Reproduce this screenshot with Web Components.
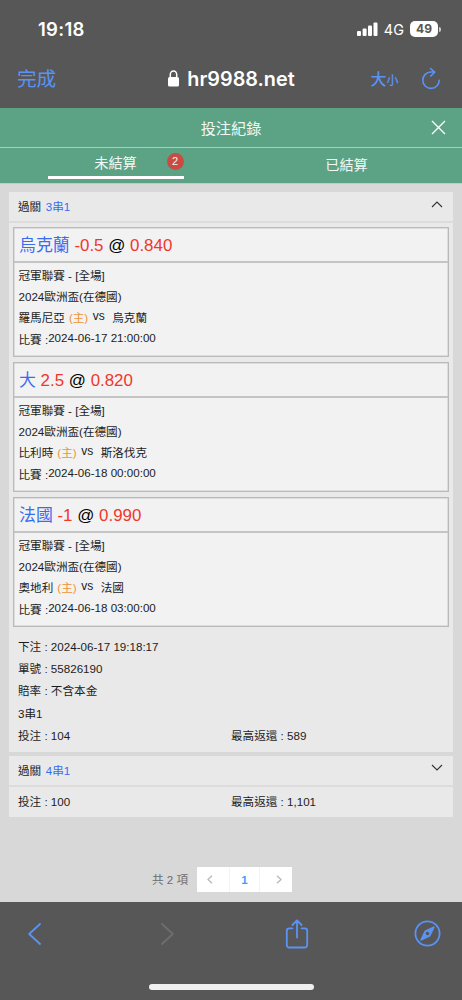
<!DOCTYPE html>
<html lang="zh-Hant">
<head>
<meta charset="utf-8">
<title>投注紀錄</title>
<style>
    body {
        margin: 0;
        background: #d8d8d8;
        font-family: "Liberation Sans", "Noto Sans CJK TC", sans-serif;
        font-size: 11.6px;
        color: #1c1c1c;
    }
</style>
</head>
<body>
<phone-screen>
    <status-bar slot="top" time="19:18" network="4G" battery="49"></status-bar>
    <address-bar slot="top" host="hr9988.net"></address-bar>
    <records-header heading="投注紀錄" count="2"></records-header>
    <bet-group type="過關" combo="3串1" open>
        <bet-card pick="烏克蘭" line="-0.5" odds="0.840" home="羅馬尼亞" away="烏克蘭" time="2024-06-17 21:00:00"></bet-card>
        <bet-card pick="大" line="2.5" odds="0.820" home="比利時" away="斯洛伐克" time="2024-06-18 00:00:00"></bet-card>
        <bet-card pick="法國" line="-1" odds="0.990" home="奧地利" away="法國" time="2024-06-18 03:00:00"></bet-card>
        <bet-summary slot="summary" stake="104" payout="589">
            <div>下注 : 2024-06-17 19:18:17</div>
            <div>單號 : 55826190</div>
            <div>賠率 : 不含本金</div>
            <div>3串1</div>
        </bet-summary>
    </bet-group>
    <bet-group type="過關" combo="4串1">
        <bet-summary slot="summary" stake="100" payout="1,101"></bet-summary>
    </bet-group>
    <page-nav total="2" page="1"></page-nav>
    <tool-bar slot="bottom"></tool-bar>
</phone-screen>

<script>
class BaseElement extends HTMLElement {
    constructor() {
        super();
        this.attachShadow({ mode: 'open' });
    }

    connectedCallback() {
        this.shadowRoot.innerHTML = this.render();
    }

    attr(name) {
        return this.getAttribute(name) || '';
    }
}

class PhoneScreen extends BaseElement {
    render() {
        return `
            <style>
                :host {
                    display: flex;
                    flex-direction: column;
                    width: 462px;
                    height: 1000px;
                    overflow: hidden;
                }
                header, footer { flex: none; background: #575757; }
                header { height: 108px; }
                footer { height: 98px; }
                main { flex: 1; min-height: 0; display: flex; flex-direction: column; }
            </style>
            <header><slot name="top"></slot></header>
            <main><slot></slot></main>
            <footer><slot name="bottom"></slot></footer>
        `;
    }
}

class StatusBar extends BaseElement {
    render() {
        return `
            <style>
                :host {
                    display: flex;
                    align-items: center;
                    box-sizing: border-box;
                    height: 58px;
                    padding: 0 21px 0 38px;
                    color: #fff;
                    font-family: Inter, sans-serif;
                }
                .time { flex: 1; font-size: 18.5px; font-weight: 600; letter-spacing: 0.3px; }
                .bars { margin-right: 6px; }
                .network { font-size: 14.5px; margin-right: 6px; line-height: 20px; margin-top: 2px; }
                .battery {
                    width: 28px;
                    height: 15.5px;
                    border-radius: 5px;
                    background: #fff;
                    color: #575757;
                    font-size: 12px;
                    font-weight: 700;
                    line-height: 16px;
                    text-align: center;
                }
                .nub { width: 2px; height: 5px; margin-left: 1px; border-radius: 0 2px 2px 0; background: #ccc; }
            </style>
            <span class="time">${this.attr('time')}</span>
            <svg class="bars" width="21" height="14" viewBox="0 0 21 14" fill="#fff">
                <rect x="0" y="9" width="4" height="5" rx="1"/>
                <rect x="5.6" y="6.5" width="4" height="7.5" rx="1"/>
                <rect x="11" y="3.5" width="4" height="10.5" rx="1"/>
                <rect x="16.5" y="0.5" width="4" height="13.5" rx="1"/>
            </svg>
            <span class="network">${this.attr('network')}</span>
            <span class="battery">${this.attr('battery')}</span>
            <span class="nub"></span>
        `;
    }
}

class AddressBar extends BaseElement {
    render() {
        return `
            <style>
                :host {
                    display: grid;
                    grid-template-columns: 1fr auto 1fr;
                    align-items: center;
                    height: 42px;
                    padding: 0 21px 0 17px;
                    color: #5a93f5;
                }
                .done { font-size: 19.6px; margin-top: -4px; }
                .host {
                    display: flex;
                    align-items: center;
                    margin: -1px 0 0 5px;
                    color: #fff;
                    font-family: Inter, sans-serif;
                    font-size: 19.8px;
                    font-weight: 600;
                }
                .host svg { margin-right: 8px; }
                .tools { display: flex; justify-content: flex-end; align-items: center; }
                .size { display: flex; align-items: baseline; font-weight: 500; font-size: 16px; margin: -3px 22.5px 0 0; }
                .size small { font-size: 12px; }
            </style>
            <span class="done">完成</span>
            <span class="host">
                <svg width="11" height="17" viewBox="0 0 11 17">
                    <path d="M2.3 8V4.6a3.2 3.6 0 0 1 6.4 0V8" fill="none" stroke="#fff" stroke-width="1.5"/>
                    <rect y="7" width="11" height="9.5" rx="1.6" fill="#fff"/>
                </svg>${this.attr('host')}
            </span>
            <span class="tools">
                <span class="size">大<small>小</small></span>
                <svg width="20" height="24" viewBox="0 0 20 24" fill="none" stroke="#5a93f5" stroke-width="1.6" stroke-linecap="round" stroke-linejoin="round">
                    <path d="M18.2 13.2A8.2 8.2 0 1 1 10 5h3.6M9.5 1.5L13.7 5.2L9.8 9"/>
                </svg>
            </span>
        `;
    }
}

class RecordsHeader extends BaseElement {
    render() {
        return `
            <style>
                :host { display: block; flex: none; height: 76px; margin-bottom: 8px; background: #5ba384; color: #f2f8f5; border-bottom: 1px solid #b9cfc5; box-sizing: border-box; }
                .title {
                    display: grid;
                    grid-template-columns: 1fr auto 1fr;
                    align-items: center;
                    height: 39px;
                    border-bottom: 1px solid #a8cdbc;
                    font-size: 15.2px;
                }
                .title span { grid-column: 2; margin-top: -2px; }
                .title svg { justify-self: end; margin: -1px 16px 0 0; }
                .tabs { display: grid; grid-template-columns: 1fr 1fr; height: 35px; font-size: 14.2px; text-align: center; }
                .tab { position: relative; line-height: 35px; }
                .active { width: 136px; height: 27.5px; line-height: 31px; margin-left: 47.5px; border-bottom: 3px solid #fff; }
                .badge {
                    position: absolute;
                    top: 4.5px;
                    right: 0;
                    width: 17px;
                    height: 17px;
                    border-radius: 50%;
                    background: #cc4b40;
                    font-size: 11px;
                    line-height: 17px;
                }
            </style>
            <div class="title">
                <span>${this.attr('heading')}</span>
                <svg width="15" height="15" viewBox="0 0 15 15" stroke="#fff" stroke-width="1.4"><path d="M1 1L14 14M14 1L1 14"/></svg>
            </div>
            <div class="tabs">
                <div class="tab active">未結算<span class="badge">${this.attr('count')}</span></div>
                <div class="tab">已結算</div>
            </div>
        `;
    }
}

class BetGroup extends BaseElement {
    render() {
        const arrow = this.hasAttribute('open') ? 'M1 6L6 1L11 6' : 'M1 1L6 6L11 1';
        return `
            <style>
                :host { display: block; flex: none; margin: 0 9px 4px; background: #e9e9e9; }
                .head {
                    display: flex;
                    align-items: center;
                    height: 29px;
                    padding: 0 10px 0 9px;
                    border-bottom: 2px solid #dcdcdc;
                }
                .head span { margin-top: -1px; }
                .combo { flex: 1; margin-left: 4.5px; color: #3a6cf0; }
                .head svg { margin-bottom: 5px; }
                .cards { display: flex; flex-direction: column; gap: 5px; padding: 4px 4px 0; }
                :host(:not([open])) .cards { display: none; }
            </style>
            <div class="head">
                <span>${this.attr('type')}</span>
                <span class="combo">${this.attr('combo')}</span>
                <svg width="12" height="7" viewBox="0 0 12 7" fill="none" stroke="#333" stroke-width="1.1"><path d="${arrow}"/></svg>
            </div>
            <div class="cards"><slot></slot></div>
            <slot name="summary"></slot>
        `;
    }
}

class BetCard extends BaseElement {
    render() {
        return `
            <style>
                :host {
                    display: block;
                    box-sizing: border-box;
                    height: 130px;
                    border: 1.5px solid #bababa;
                    box-shadow: inset 0 0 0 0.5px #c8c8c8;
                    background: #f2f2f2;
                }
                .pick {
                    height: 33px;
                    padding-left: 5px;
                    border-bottom: 2px solid #c4c4c4;
                    font-size: 16.9px;
                    line-height: 35px;
                    color: #000;
                    white-space: pre;
                }
                .name { color: #3a6cf0; }
                .red { color: #f0372b; }
                .info { padding: 2px 0 0 4.5px; }
                .info div { display: flex; height: 21.2px; line-height: 22px; white-space: pre; }
                .host { color: #ee9235; margin-left: 4px; }
                .vs { margin: -2px 7.5px 0 4.5px; font-size: 12px; }
                .time { margin-top: -2px; }
            </style>
            <div class="pick"><span class="name">${this.attr('pick')}</span> <span class="red">${this.attr('line')}</span> @ <span class="red">${this.attr('odds')}</span></div>
            <div class="info">
                <div>冠軍聯賽 - [全場]</div>
                <div>2024歐洲盃(在德國)</div>
                <div><span>${this.attr('home')}</span><span class="host">(主)</span><span class="vs">vs</span><span>${this.attr('away')}</span></div>
                <div><span>比賽 :</span><span class="time">${this.attr('time')}</span></div>
            </div>
        `;
    }
}

class BetSummary extends BaseElement {
    render() {
        // the collapsed group only has the stake row
        const padding = this.childElementCount ? '9px 0 5px' : '4px 0';
        return `
            <style>
                :host { display: block; padding: ${padding}; line-height: 22.2px; }
                ::slotted(div) { padding-left: 9px; height: 22.2px; }
                .totals { display: grid; grid-template-columns: 1fr 1fr; height: 22.2px; }
                .totals span:first-child { padding-left: 9px; }
            </style>
            <slot></slot>
            <div class="totals">
                <span>投注 : ${this.attr('stake')}</span>
                <span>最高返還 : ${this.attr('payout')}</span>
            </div>
        `;
    }
}

class PageNav extends BaseElement {
    render() {
        return `
            <style>
                :host {
                    display: flex;
                    align-items: center;
                    justify-content: center;
                    height: 25px;
                    margin: auto 18px 9px 0;
                    border-bottom: 1px solid transparent;
                    color: #6b6c6f;
                }
                .total { margin: -2px 9px 0 0; }
                .box {
                    display: grid;
                    grid-template-columns: repeat(3, 1fr);
                    width: 95px;
                    height: 25px;
                    background: #fff;
                }
                .box > * { display: flex; align-items: center; justify-content: center; }
                .page { border: solid #f3f3f3; border-width: 0 1px; color: #409eff; font-weight: 700; }
                .prev { padding-right: 6px; }
                .next { padding-left: 6px; }
            </style>
            <span class="total">共 ${this.attr('total')} 項</span>
            <div class="box">
                <span class="prev"><svg width="6" height="9" viewBox="0 0 6 9" fill="none" stroke="#b6b9bf" stroke-width="1.3"><path d="M5 0.7L1 4.5L5 8.3"/></svg></span>
                <span class="page">${this.attr('page')}</span>
                <span class="next"><svg width="6" height="9" viewBox="0 0 6 9" fill="none" stroke="#b6b9bf" stroke-width="1.3"><path d="M1 0.7L5 4.5L1 8.3"/></svg></span>
            </div>
        `;
    }
}

class ToolBar extends BaseElement {
    render() {
        return `
            <style>
                :host { display: flex; flex-direction: column; height: 98px; }
                svg { fill: none; stroke: #5a93f5; stroke-width: 1.8; stroke-linecap: round; stroke-linejoin: round; }
                .icons { display: flex; align-items: center; height: 63px; padding-left: 27.5px; }
                .forward { margin: 0 111px 0 120.5px; stroke: #6e6e6e; }
                .compass { margin-left: 105px; }
                .indicator { width: 165px; height: 6px; margin: 19px 0 0 149px; border-radius: 3px; background: #f0f0f0; }
            </style>
            <div class="icons">
                <svg width="13" height="22" viewBox="0 0 13 22"><path d="M12 1L1.2 11L12 21"/></svg>
                <svg class="forward" width="13" height="22" viewBox="0 0 13 22"><path d="M1 1L11.8 11L1 21"/></svg>
                <svg width="24" height="30" viewBox="0 0 24 30">
                    <path d="M7.5 9.3H4.2a2.4 2.4 0 0 0-2.4 2.4v14.4a2.4 2.4 0 0 0 2.4 2.4h15.6a2.4 2.4 0 0 0 2.4-2.4V11.7a2.4 2.4 0 0 0-2.4-2.4H16.5M12 18.5V1.5M7.4 6L12 1.3L16.6 6"/>
                </svg>
                <svg class="compass" width="27" height="27" viewBox="0 0 27 27">
                    <circle cx="13.5" cy="13.5" r="12.1"/>
                    <path d="M19.8 7.2L15.7 15.7L7.2 19.8L11.3 11.3Z" fill="#5a93f5"/>
                    <circle cx="13.5" cy="13.5" r="1.7" fill="#575757" stroke="none"/>
                </svg>
            </div>
            <div class="indicator"></div>
        `;
    }
}

customElements.define('phone-screen', PhoneScreen);
customElements.define('status-bar', StatusBar);
customElements.define('address-bar', AddressBar);
customElements.define('records-header', RecordsHeader);
customElements.define('bet-group', BetGroup);
customElements.define('bet-card', BetCard);
customElements.define('bet-summary', BetSummary);
customElements.define('page-nav', PageNav);
customElements.define('tool-bar', ToolBar);
</script>
</body>
</html>
